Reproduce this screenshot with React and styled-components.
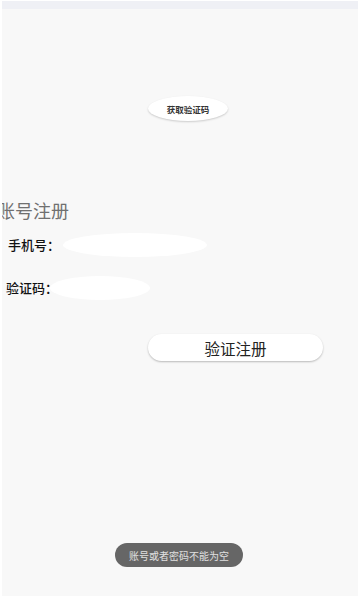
import styled, { createGlobalStyle } from "styled-components";

const GlobalStyle = createGlobalStyle`
    html, body {
        margin: 0;
        padding: 0;
        background: #ffffff;
        font-family: "Noto Sans CJK SC", "Noto Sans", sans-serif;
    }
`;

export default function App() {
    return (
        <>
        <GlobalStyle />
        <Screen>
            <StatusBar />
            <Content>
                <CodeButton>获取验证码</CodeButton>
                <Title>账号注册</Title>
                <FieldRow $top={11}>
                    <Label $indent={6}>手机号：</Label>
                    <Input $width={144} $gap={3} />
                </FieldRow>
                <FieldRow $top={18}>
                    <Label $indent={4}>验证码：</Label>
                    <Input $width={100} $gap={-8} />
                </FieldRow>
                <SubmitButton>验证注册</SubmitButton>
            </Content>
            <Toast>账号或者密码不能为空</Toast>
        </Screen>
        </>
    );
}

const Screen = styled.div`
    position: relative;
    margin: 1px 2px 0 2px;
    height: 595px;
    background: #f8f8f8;
    display: flex;
    flex-direction: column;
    overflow: hidden;
`;

const StatusBar = styled.div`
    height: 8px;
    background: #eff0f5;
    flex-shrink: 0;
`;

const Content = styled.div`
    display: flex;
    flex-direction: column;
    align-items: flex-start;
`;

const CodeButton = styled.button`
    margin: 87px 0 0 146px;
    width: 80px;
    height: 25px;
    padding: 0;
    border: none;
    border-radius: 50%;
    background: #ffffff;
    box-shadow: 0 1px 2px rgba(0, 0, 0, 0.18);
    font-family: inherit;
    font-size: 8.5px;
    font-weight: 700;
    color: #333333;
`;

const Title = styled.h1`
    margin: 78px 0 0 -5px;
    font-size: 18px;
    font-weight: 400;
    line-height: 22px;
    color: #707070;
`;

const FieldRow = styled.div`
    margin-top: ${p => p.$top}px;
    display: flex;
    align-items: center;
    height: 25px;
`;

const Label = styled.span`
    flex-shrink: 0;
    margin-left: ${p => p.$indent}px;
    width: 52px;
    white-space: nowrap;
    font-size: 13px;
    font-weight: 500;
    color: #111111;
`;

const Input = styled.div`
    flex-shrink: 0;
    margin-left: ${p => p.$gap}px;
    width: ${p => p.$width}px;
    height: 24px;
    border-radius: 50%;
    background: #ffffff;
`;

const SubmitButton = styled.button`
    margin: 34px 0 0 146px;
    width: 175px;
    height: 27px;
    padding: 0;
    border: none;
    border-radius: 14px;
    background: #ffffff;
    box-shadow: 0 1px 2px rgba(0, 0, 0, 0.25);
    font-family: inherit;
    font-size: 15.5px;
    color: #222222;
`;

const Toast = styled.div`
    position: absolute;
    left: 113px;
    top: 542px;
    width: 128px;
    height: 24px;
    border-radius: 12px;
    background: #666666;
    color: #e0e0e0;
    font-size: 10px;
    display: flex;
    align-items: center;
    justify-content: center;
`;
